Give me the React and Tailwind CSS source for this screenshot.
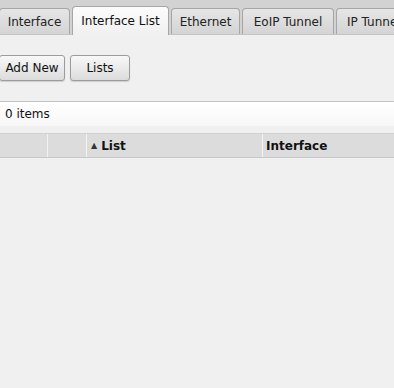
export default function App() {
  const font = { fontFamily: '"DejaVu Sans", Verdana, sans-serif' };
  const inactive =
    "h-[26px] flex items-center justify-center border border-b-0 border-[#a6a6a6] rounded-t-[4px] bg-gradient-to-b from-[#e6e6e6] to-[#d4d4d4] text-[12px] text-[#222] shrink-0";
  return (
    <div className="w-[394px] h-[388px] bg-[#f0f0f0] overflow-hidden text-[#111]" style={font}>
      <div className="h-[35px] bg-[#d2d2d2] flex items-end gap-[2px] pl-[0px] -ml-[1px] border-b border-[#c4c4c4]">
        <div className={inactive + " w-[71px]"}>Interface</div>
        <div className="h-[29px] -mb-px w-[97px] flex items-center justify-center border border-b-0 border-[#a6a6a6] rounded-t-[4px] bg-gradient-to-b from-[#fcfcfc] to-[#f0f0f0] text-[12px] text-[#111] shrink-0">
          Interface List
        </div>
        <div className={inactive + " w-[69px]"}>Ethernet</div>
        <div className={inactive + " w-[92px]"}>EoIP Tunnel</div>
        <div className={inactive + " w-[80px] justify-start pl-[10px]"}>IP Tunnel</div>
      </div>
      <div className="flex gap-[5px] mt-[20px] -ml-[1px]">
        <button className="h-[26px] w-[66px] border border-[#9c9c9c] rounded-[3px] bg-gradient-to-b from-[#f8f8f8] to-[#dcdcdc] shadow-[0_1px_1px_rgba(0,0,0,0.15)] text-[12px] text-[#111]">
          Add New
        </button>
        <button className="h-[26px] w-[60px] border border-[#9c9c9c] rounded-[3px] bg-gradient-to-b from-[#f8f8f8] to-[#dcdcdc] shadow-[0_1px_1px_rgba(0,0,0,0.15)] text-[12px] text-[#111]">
          Lists
        </button>
      </div>
      <div className="mt-[20px] h-[25px] border-t border-[#c4c4c4] bg-gradient-to-b from-[#ffffff] to-[#f7f7f7] flex items-center pl-[5px] text-[12px] text-[#111]">
        0 items
      </div>
      <div className="mt-[7px] h-[25px] flex bg-[#dcdcdc] border-t border-[#d0d0d0] border-b border-b-[#c8c8c8] text-[12px] font-bold text-[#111]">
        <div className="w-[48px] border-r border-[#f2f2f2]"></div>
        <div className="w-[39px] border-r border-[#f2f2f2]"></div>
        <div className="w-[176px] border-r border-[#f2f2f2] flex items-center pl-[4px] gap-[4px]">
          <span className="text-[8px] text-[#333] leading-none">▲</span>
          <span>List</span>
        </div>
        <div className="flex-1 flex items-center pl-[3px]">Interface</div>
      </div>
    </div>
  );
}
